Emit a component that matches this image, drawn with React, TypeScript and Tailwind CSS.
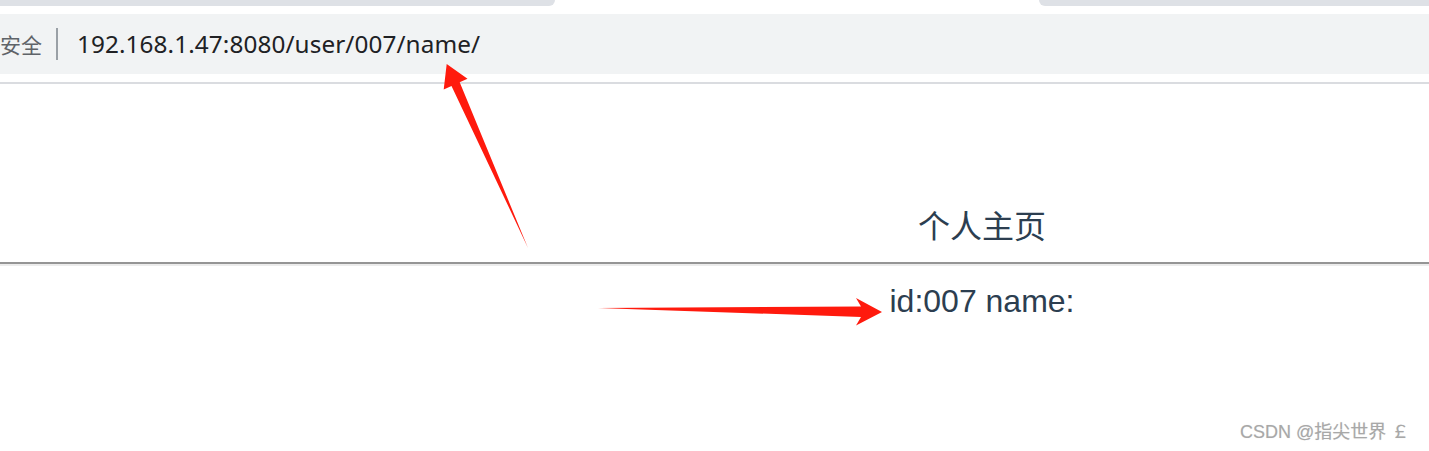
import React from "react";

export default function App() {
  return (
    <div className="relative w-[1429px] h-[451px] overflow-hidden bg-white">
      {/* tab strip bottom */}
      <div className="flex h-[6px]">
        <div className="w-[555px] bg-[#dee1e6] rounded-br-[6px]" />
        <div className="w-[484px] bg-white" />
        <div className="flex-1 bg-[#dee1e6] rounded-bl-[6px]" />
      </div>
      <div className="h-[8px]" />
      {/* address bar */}
      <div className="h-[60px] bg-[#f1f3f4] flex items-center">
        <span
          className="text-[21px] leading-none text-[#5f6368]"
          style={{ fontFamily: '"Noto Sans CJK SC", sans-serif' }}
        >
          安全
        </span>
        <div className="ml-[14px] w-[2px] h-[32px] bg-[#9aa0a6]" />
        <span
          className="ml-[19px] text-[24.3px] tracking-[0.1px] leading-none text-[#202124]"
          style={{ fontFamily: '"Noto Sans", sans-serif' }}
        >
          192.168.1.47:8080/user/007/name/
        </span>
      </div>
      <div className="h-[8px]" />
      <div className="h-[2px] bg-[#dadce0]" />

      {/* page content */}
      <div className="w-[1964px] text-center text-[#2c3e50]">
        <div
          className="mt-[123px] text-[32px] leading-[40px]"
          style={{ fontFamily: '"Liberation Sans", "Noto Sans CJK SC", sans-serif' }}
        >
          个人主页
        </div>
      </div>
      <div className="mt-[15px] h-[2px] bg-[#959595]" />
      <div className="h-[2px] bg-[#ececec]" />
      <div className="w-[1964px] text-center text-[#2c3e50]">
        <div
          className="mt-[15px] text-[32px] leading-[40px]"
          style={{ fontFamily: '"Liberation Sans", "Noto Sans CJK SC", sans-serif' }}
        >
          id:007 name:
        </div>
      </div>

      {/* annotation arrows */}
      <svg
        className="absolute inset-0 pointer-events-none"
        width="1429"
        height="451"
        viewBox="0 0 1429 451"
      >
        <polygon
          fill="#ff1a0d"
          points="528,248 459.7,82.3 467.5,78.8 446.7,64 443.7,89.4 451.5,85.9"
        />
        <polygon
          fill="#ff1a0d"
          points="598,308 861,306.5 856,298 882,312 856,325.5 861,317"
        />
      </svg>

      {/* watermark */}
      <div
        className="absolute left-[1240px] top-[420px] text-[18px] leading-[24px] text-[#a8a8a8] whitespace-nowrap"
        style={{
          fontFamily: '"Liberation Sans", "Noto Sans CJK SC", sans-serif',
          textShadow: "0 0 1px rgba(0,0,0,0.15)",
        }}
      >
        CSDN @指尖世界 ￡
      </div>
    </div>
  );
}
